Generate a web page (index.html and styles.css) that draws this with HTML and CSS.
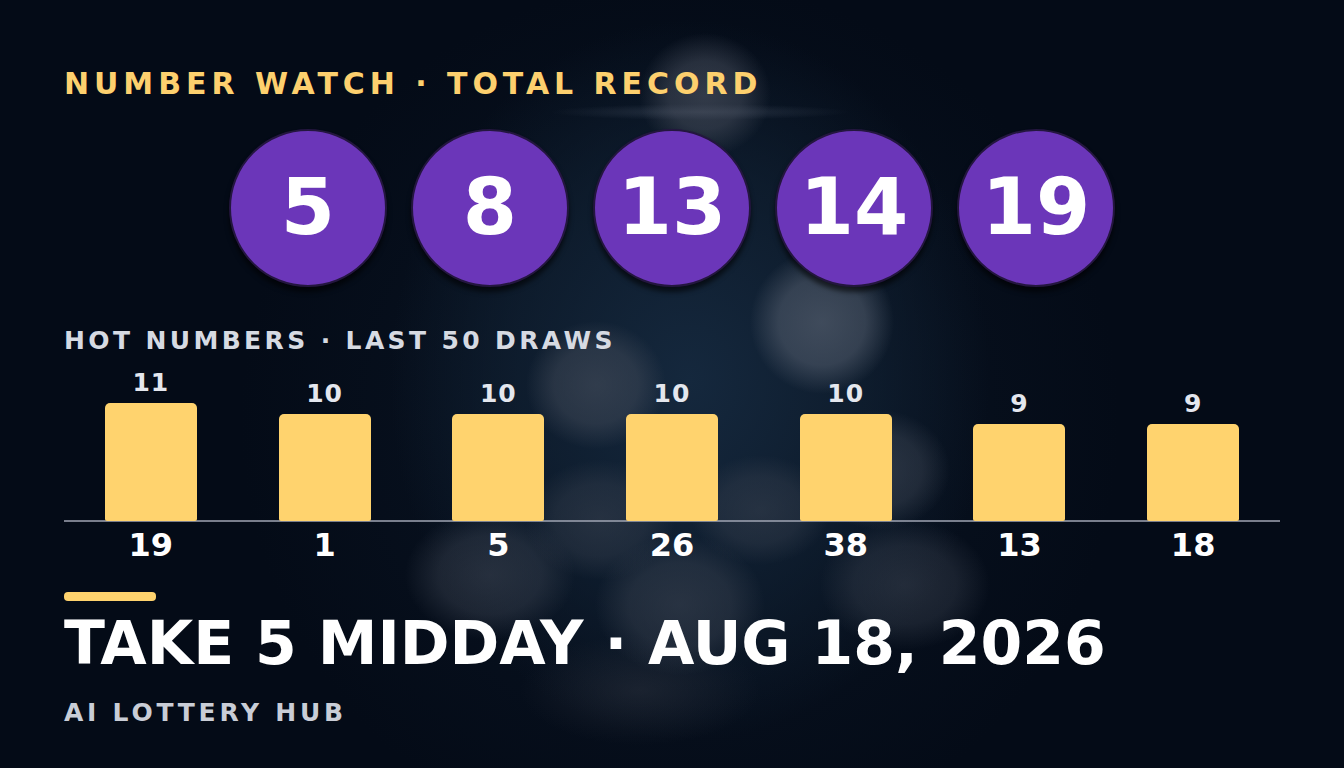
FILE: index.html
```html
<!DOCTYPE html>
<html lang="en">
<head>
<meta charset="utf-8">
<title>Take 5 Midday</title>
<link rel="stylesheet" href="styles.css">
</head>
<body>
<div class="page">
  <div class="kicker">NUMBER WATCH · TOTAL RECORD</div>
  <div class="balls">
    <div class="ball">5</div>
    <div class="ball">8</div>
    <div class="ball">13</div>
    <div class="ball">14</div>
    <div class="ball">19</div>
  </div>
  <div class="hot-label">HOT NUMBERS · LAST 50 DRAWS</div>
  <div class="chart">
    <div class="col"><div class="val">11</div><div class="bar" style="height:118px"></div></div>
    <div class="col"><div class="val">10</div><div class="bar" style="height:107px"></div></div>
    <div class="col"><div class="val">10</div><div class="bar" style="height:107px"></div></div>
    <div class="col"><div class="val">10</div><div class="bar" style="height:107px"></div></div>
    <div class="col"><div class="val">10</div><div class="bar" style="height:107px"></div></div>
    <div class="col"><div class="val">9</div><div class="bar" style="height:97px"></div></div>
    <div class="col"><div class="val">9</div><div class="bar" style="height:97px"></div></div>
  </div>
  <div class="labels">
    <div class="lab">19</div>
    <div class="lab">1</div>
    <div class="lab">5</div>
    <div class="lab">26</div>
    <div class="lab">38</div>
    <div class="lab">13</div>
    <div class="lab">18</div>
  </div>
  <div class="accent"></div>
  <div class="headline">TAKE 5 MIDDAY · AUG 18, 2026</div>
  <div class="brand">AI LOTTERY HUB</div>
</div>
</body>
</html>
```

FILE: styles.css
```css
* { box-sizing: border-box; }
html, body { margin: 0; padding: 0; }
body {
  width: 1344px;
  height: 768px;
  overflow: hidden;
  font-family: "DejaVu Sans", "Liberation Sans", sans-serif;
  font-weight: bold;
  background-color: #040b17;
  background-image:
    radial-gradient(ellipse 66px 62px at 705px 95px, rgba(78,84,98,0.6) 0%, rgba(78,84,98,0.45) 55%, rgba(78,84,98,0) 100%),
    radial-gradient(ellipse 150px 8px at 700px 112px, rgba(120,130,150,0.25), rgba(120,130,150,0) 100%),
    radial-gradient(ellipse 72px 72px at 822px 322px, rgba(84,94,110,0.7) 0%, rgba(84,94,110,0.55) 60%, rgba(84,94,110,0) 100%),
    radial-gradient(ellipse 70px 64px at 596px 385px, rgba(70,78,92,0.6) 0%, rgba(70,78,92,0.45) 60%, rgba(70,78,92,0) 100%),
    radial-gradient(ellipse 70px 60px at 880px 470px, rgba(66,74,88,0.55) 0%, rgba(66,74,88,0.4) 60%, rgba(66,74,88,0) 100%),
    radial-gradient(ellipse 75px 60px at 600px 520px, rgba(60,68,82,0.5) 0%, rgba(60,68,82,0.35) 60%, rgba(60,68,82,0) 100%),
    radial-gradient(ellipse 70px 55px at 760px 510px, rgba(60,68,82,0.5) 0%, rgba(60,68,82,0.35) 60%, rgba(60,68,82,0) 100%),
    radial-gradient(ellipse 85px 65px at 490px 575px, rgba(62,70,84,0.55) 0%, rgba(62,70,84,0.4) 60%, rgba(62,70,84,0) 100%),
    radial-gradient(ellipse 85px 70px at 680px 605px, rgba(62,70,84,0.55) 0%, rgba(62,70,84,0.4) 60%, rgba(62,70,84,0) 100%),
    radial-gradient(ellipse 85px 65px at 905px 585px, rgba(62,70,84,0.5) 0%, rgba(62,70,84,0.35) 60%, rgba(62,70,84,0) 100%),
    radial-gradient(ellipse 120px 55px at 640px 690px, rgba(44,50,62,0.5), rgba(44,50,62,0) 100%),
    radial-gradient(ellipse 300px 360px at 690px 380px, rgba(22,42,64,0.9) 0%, rgba(16,32,50,0.7) 60%, rgba(4,11,23,0) 100%),
    radial-gradient(ellipse 440px 440px at 680px 420px, rgba(12,24,40,0.8), rgba(4,11,23,0) 100%);
}
.page {
  width: 1344px;
  height: 768px;
  padding: 69px 64px 0 64px;
  display: flex;
  flex-direction: column;
}
.kicker {
  font-size: 30px;
  line-height: 1;
  letter-spacing: 0.165em;
  color: #fdd06e;
  white-space: nowrap;
}
.balls {
  display: flex;
  justify-content: center;
  gap: 24px;
  margin-top: 30px;
}
.ball {
  width: 158px;
  height: 158px;
  border-radius: 50%;
  background: #6b36b9;
  border: 2px solid #24163f;
  box-shadow: 0 5px 5px rgba(0,0,0,0.6);
  color: #ffffff;
  font-size: 78px;
  line-height: 1;
  display: flex;
  align-items: center;
  justify-content: center;
  padding-bottom: 2px;
}
.hot-label {
  margin-top: 41px;
  font-size: 25px;
  line-height: 1;
  letter-spacing: 0.135em;
  color: #d6dae2;
  white-space: nowrap;
}
.chart {
  margin-top: 17px;
  height: 152px;
  display: grid;
  grid-template-columns: repeat(7, 1fr);
  align-items: end;
  border-bottom: 2px solid rgba(160,166,180,0.75);
}
.col {
  display: flex;
  flex-direction: column;
  align-items: center;
  gap: 8px;
}
.val {
  font-size: 25px;
  line-height: 1;
  letter-spacing: 1px;
  color: #e4e7ee;
}
.bar {
  width: 92px;
  background: #ffd36e;
  border-radius: 5px 5px 2px 2px;
}
.labels {
  margin-top: 7px;
  display: grid;
  grid-template-columns: repeat(7, 1fr);
}
.lab {
  text-align: center;
  font-size: 32px;
  line-height: 1;
  color: #ffffff;
}
.accent {
  margin-top: 31px;
  width: 92px;
  height: 9px;
  border-radius: 4px;
  background: #ffd36e;
}
.headline {
  margin-top: 12px;
  font-size: 60px;
  line-height: 1;
  letter-spacing: 0;
  color: #ffffff;
  white-space: nowrap;
}
.brand {
  margin-top: 27px;
  font-size: 25px;
  line-height: 1;
  letter-spacing: 0.15em;
  color: #c9cdd6;
  white-space: nowrap;
}
```
